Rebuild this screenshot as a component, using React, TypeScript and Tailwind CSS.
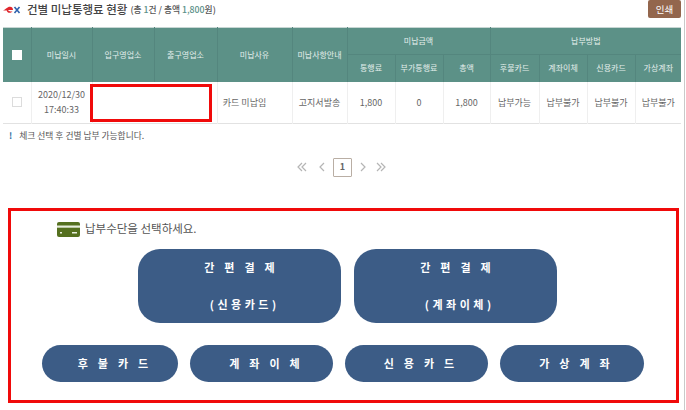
import React from 'react';

const font = { fontFamily: '"Noto Sans CJK KR", "Noto Sans", sans-serif' };

const headCell = 'border-r border-[#54867e] font-normal text-[8px] text-[#e4efec] text-center p-0';
const bodyCell = 'border-r border-[#efefef] font-normal text-[9px] text-[#666] text-center p-0';

const PayButton = ({ className, children }: { className: string; children: React.ReactNode }) => (
  <button className={`bg-[#3c5c86] text-white font-bold text-[11px] flex flex-col items-center ${className}`}>
    {children}
  </button>
);

const PageArrow = ({ d }: { d: string }) => (
  <svg width="12" height="12" viewBox="0 0 12 12" fill="none" stroke="#b5b5b5" strokeWidth="1.2">
    <path d={d} />
  </svg>
);

export default function App() {
  return (
    <div className="w-[686px] h-[410px] bg-white overflow-hidden relative" style={font}>
      <div className="w-[685px] h-full border-r border-[#c9c9c9]">
        {/* Title */}
        <div className="flex items-center h-[27px] pl-[3px] pr-[3px] pb-[8px]">
          <svg width="18" height="8" viewBox="0 0 18 8" className="mr-[6px]">
            <path d="M0 4.6C3 3.4 4 .8 7 .8c2.2 0 3 1.4 3 3.2H5.2c.4 1.4 2 1.6 4.3 1.2-1.4 1.8-4.5 2.2-5.4.2-.2-.3-.2-.5-.3-.8z" fill="#e0262c" />
            <path d="M11.5 1l5 6M16.5 1l-5 6" stroke="#2f62ad" strokeWidth="1.6" />
          </svg>
          <span className="text-[11.5px] text-[#444] font-medium">건별 미납통행료 현황</span>
          <span className="text-[8.75px] text-[#555] ml-[3px] font-medium">
            (총 <span className="text-[#5b9088]">1</span>건 / 총액 <span className="text-[#5b9088]">1,800</span>원)
          </span>
          <button className="ml-auto w-[33px] h-[18px] mb-[-2px] bg-[#93664d] rounded-[2px] text-[9.5px] text-white mt-[-3px]">
            인쇄
          </button>
        </div>

        {/* Table */}
        <table className="ml-[3px] w-[678px] table-fixed border-collapse border-t border-[#c7d6d3]">
          <colgroup>
            <col className="w-[28px]" />
            <col className="w-[61px]" />
            <col className="w-[62px]" />
            <col className="w-[63px]" />
            <col className="w-[75px]" />
            <col className="w-[55px]" />
            <col className="w-[48px]" />
            <col className="w-[48px]" />
            <col className="w-[47px]" />
            <col className="w-[49px]" />
            <col className="w-[48px]" />
            <col className="w-[48px]" />
            <col className="w-[46px]" />
          </colgroup>
          <thead className="bg-[#5c9187]">
            <tr className="h-[27px]">
              <th rowSpan={2} className={headCell}>
                <span className="block w-[10px] h-[10px] bg-white mx-auto" />
              </th>
              <th rowSpan={2} className={headCell}>미납일시</th>
              <th rowSpan={2} className={headCell}>입구영업소</th>
              <th rowSpan={2} className={headCell}>출구영업소</th>
              <th rowSpan={2} className={headCell}>미납사유</th>
              <th rowSpan={2} className={headCell}>미납사항안내</th>
              <th colSpan={3} className={`${headCell} border-b`}>미납금액</th>
              <th colSpan={4} className={`${headCell} border-b border-r-0`}>납부방법</th>
            </tr>
            <tr className="h-[27px]">
              <th className={headCell}>통행료</th>
              <th className={headCell}>부가통행료</th>
              <th className={headCell}>총액</th>
              <th className={headCell}>후불카드</th>
              <th className={headCell}>계좌이체</th>
              <th className={headCell}>신용카드</th>
              <th className={`${headCell} border-r-0`}>가상계좌</th>
            </tr>
          </thead>
          <tbody>
            <tr className="h-[42px] border-b border-[#e2e2e2]">
              <td className={bodyCell}>
                <span className="block w-[10px] h-[10px] border border-[#dcdcdc] mx-auto" />
              </td>
              <td className={`${bodyCell} leading-[15px]`}>
                2020/12/30
                <br />
                17:40:33
              </td>
              <td colSpan={2} className={`${bodyCell} relative`}>
                <div className="absolute left-[-3px] right-[5px] top-[2px] bottom-[1px] border-[3px] border-[#f00a0a] bg-white" />
              </td>
              <td className={`${bodyCell} pr-[20px]`}>카드 미납임</td>
              <td className={bodyCell}>고지서발송</td>
              <td className={bodyCell}>1,800</td>
              <td className={bodyCell}>0</td>
              <td className={bodyCell}>1,800</td>
              <td className={bodyCell}>납부가능</td>
              <td className={bodyCell}>납부불가</td>
              <td className={bodyCell}>납부불가</td>
              <td className={`${bodyCell} border-r-0`}>납부불가</td>
            </tr>
          </tbody>
        </table>

        {/* Note */}
        <div className="flex items-center h-[24px] pl-[9px] text-[8.75px] text-[#555]">
          <span className="text-[#2f6f9f] font-bold mr-[7px]">!</span>
          체크 선택 후 건별 납부 가능합니다.
        </div>

        {/* Pagination */}
        <div className="flex items-center justify-center h-[18px] mt-[10px] ml-[-1px]">
          <PageArrow d="M6 2L2 6l4 4M10 2L6 6l4 4" />
          <span className="w-[8px]" />
          <PageArrow d="M8 2L4 6l4 4" />
          <span className="w-[5px]" />
          <span className="w-[19px] h-[19px] border border-[#b9aea4] rounded-[1px] flex items-center justify-center text-[9px] font-bold text-[#666]">
            1
          </span>
          <span className="w-[5px]" />
          <PageArrow d="M4 2l4 4-4 4" />
          <span className="w-[6px]" />
          <PageArrow d="M2 2l4 4-4 4M6 2l4 4-4 4" />
        </div>

        {/* Payment method box */}
        <div className="ml-[8px] mt-[32px] w-[671px] h-[195px] border-[3px] border-[#f00a0a]">
          <div className="flex items-center pl-[46px] pt-[9px] h-[27px]">
            <svg width="23" height="15" viewBox="0 0 23 15" className="mr-[5px]">
              <rect width="23" height="15" rx="2" fill="#55701f" />
              <rect y="3.5" width="23" height="2.2" fill="#e8eedd" />
              <rect x="3" y="10" width="2" height="1.5" fill="#e8eedd" />
              <rect x="15" y="10" width="5" height="1.5" fill="#e8eedd" />
            </svg>
            <span className="text-[11.5px] text-[#555]">납부수단을 선택하세요.</span>
          </div>

          <div className="flex gap-[13px] pl-[127px] mt-[11px]">
            <PayButton className="w-[203px] h-[74px] rounded-[22px] pt-[10px] gap-[21px]">
              <span className="tracking-[10px] mr-[-10px] leading-[16px]">간편결제</span>
              <span className="tracking-[3.5px] mr-[-10.5px] leading-[16px]">(신용카드)</span>
            </PayButton>
            <PayButton className="w-[203px] h-[74px] rounded-[22px] pt-[10px] gap-[21px]">
              <span className="tracking-[10px] mr-[-10px] leading-[16px]">간편결제</span>
              <span className="tracking-[3.5px] mr-[-8.5px] leading-[16px]">(계좌이체)</span>
            </PayButton>
          </div>

          <div className="flex pl-[31px] mt-[22px]">
            <PayButton className="w-[136px] h-[37px] rounded-[19px] justify-center">
              <span className="tracking-[10px] mr-[-16px]">후불카드</span>
            </PayButton>
            <PayButton className="w-[143px] h-[37px] rounded-[19px] justify-center ml-[12px]">
              <span className="tracking-[10px] mr-[-16px]">계좌이체</span>
            </PayButton>
            <PayButton className="w-[143px] h-[37px] rounded-[19px] justify-center ml-[12px]">
              <span className="tracking-[10px] mr-[-15px]">신용카드</span>
            </PayButton>
            <PayButton className="w-[144px] h-[37px] rounded-[19px] justify-center ml-[12px]">
              <span className="tracking-[10px] mr-[-15px]">가상계좌</span>
            </PayButton>
          </div>
        </div>
      </div>
    </div>
  );
}
